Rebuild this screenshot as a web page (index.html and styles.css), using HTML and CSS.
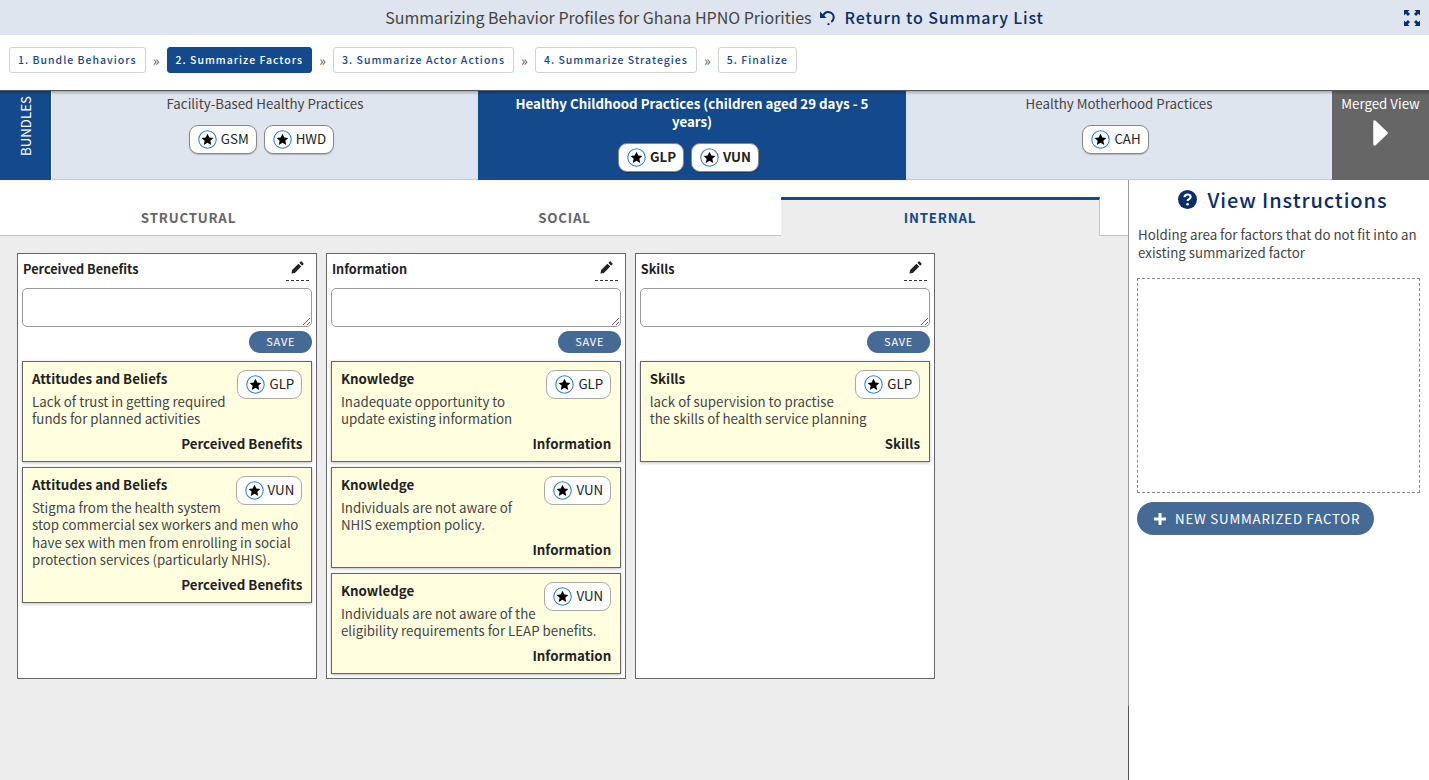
FILE: index.html
```html
<!DOCTYPE html>
<html lang="en">
<head>
    <meta charset="UTF-8">
    <meta name="viewport" content="width=device-width, initial-scale=1.0">
    <title>Summarize Factors</title>
    <link rel="stylesheet" href="styles.css">
</head>
<body>
    <svg class="defs" width="0" height="0">
        <symbol id="star" viewBox="0 0 20 20">
            <circle cx="10" cy="10" r="9.2" fill="#fff" stroke="#2f80c8" stroke-width="1.1"/>
            <path d="M10 3.9l1.9 4 4.3.5-3.2 3 .9 4.3-3.9-2.2-3.9 2.2.9-4.3-3.2-3 4.3-.5z" fill="#000"/>
        </symbol>
        <symbol id="pencil" viewBox="0 0 14 14">
            <path d="M8 3l3 3-6.800 6.800-3.700.7.700-3.700zM9 2l1.300-1.300c.4-.4 1-.4 1.400 0l1.600 1.600c.4.400.4 1 0 1.400L12 5z" fill="#222"/>
        </symbol>
    </svg>

    <header class="top_bar">
        <span class="page_title">Summarizing Behavior Profiles for Ghana HPNO Priorities</span>
        <a class="return_link">
            <svg class="return_icon" viewBox="0 0 18 18"><path d="M4 7.5c1-3 3.5-4.800 6.200-4.300 3 .5 4.800 3 4.500 5.800-.2 1.700-1.100 3.100-2.500 3.900" fill="none" stroke="#0b2d6b" stroke-width="2"/><path d="M1 2.500v6.500h6.500z" fill="#0b2d6b"/><circle cx="9.5" cy="15.2" r="1.100" fill="#0b2d6b"/></svg>
            Return to Summary List
        </a>
        <svg class="expand_icon" viewBox="0 0 16 16"><path d="M0 0h5.500L3.800 1.700 6 3.900 3.900 6 1.700 3.800 0 5.500zM16 0v5.500L14.300 3.800 12.100 6 10 3.900 12.200 1.700 10.500 0zM0 16v-5.500L1.700 12.200 3.900 10 6 12.100 3.800 14.300 5.500 16zM16 16h-5.500L12.200 14.300 10 12.100 12.100 10 14.300 12.200 16 10.500z" fill="#0b2d6b"/></svg>
    </header>

    <nav class="steps">
        <a class="step">1. Bundle Behaviors</a><span class="step_sep">»</span>
        <a class="step active">2. Summarize Factors</a><span class="step_sep">»</span>
        <a class="step">3. Summarize Actor Actions</a><span class="step_sep">»</span>
        <a class="step">4. Summarize Strategies</a><span class="step_sep">»</span>
        <a class="step">5. Finalize</a>
    </nav>

    <section class="bundles">
        <div class="bundles_label"><span>BUNDLES</span></div>
        <div class="bundle">
            <div class="bundle_name">Facility-Based Healthy Practices</div>
            <div class="bundle_tags">
                <span class="tag"><svg class="star"><use href="#star"/></svg>GSM</span>
                <span class="tag"><svg class="star"><use href="#star"/></svg>HWD</span>
            </div>
        </div>
        <div class="bundle active">
            <div class="bundle_name">Healthy Childhood Practices (children aged 29 days - 5 years)</div>
            <div class="bundle_tags">
                <span class="tag"><svg class="star"><use href="#star"/></svg>GLP</span>
                <span class="tag"><svg class="star"><use href="#star"/></svg>VUN</span>
            </div>
        </div>
        <div class="bundle">
            <div class="bundle_name">Healthy Motherhood Practices</div>
            <div class="bundle_tags">
                <span class="tag"><svg class="star"><use href="#star"/></svg>CAH</span>
            </div>
        </div>
        <div class="merged">
            <div>Merged View</div>
            <svg class="merged_arrow" viewBox="0 0 15 26"><path d="M1.5 1.5L13.5 13 1.5 24.5z" fill="#fff" stroke="#fff" stroke-width="2.5" stroke-linejoin="round"/></svg>
        </div>
    </section>

    <main class="workspace">
        <div class="board">
            <div class="tabs">
                <div class="tab">STRUCTURAL</div>
                <div class="tab">SOCIAL</div>
                <div class="tab active">INTERNAL</div>
            </div>
            <div class="columns">
                <div class="column">
                    <div class="column_head"><b>Perceived Benefits</b><span class="edit"><svg class="pencil"><use href="#pencil"/></svg></span></div>
                    <textarea class="column_input"></textarea>
                    <div class="save_row"><button class="save">SAVE</button></div>
                    <div class="card">
                        <span class="tag small"><svg class="star"><use href="#star"/></svg>GLP</span>
                        <div class="card_title">Attitudes and Beliefs</div>
                        <div class="card_text">Lack of trust in getting required funds for planned activities</div>
                        <div class="card_foot">Perceived Benefits</div>
                    </div>
                    <div class="card">
                        <span class="tag small"><svg class="star"><use href="#star"/></svg>VUN</span>
                        <div class="card_title">Attitudes and Beliefs</div>
                        <div class="card_text">Stigma from the health system<br>stop commercial sex workers and men who have sex with men from enrolling in social protection services (particularly NHIS).</div>
                        <div class="card_foot">Perceived Benefits</div>
                    </div>
                </div>
                <div class="column">
                    <div class="column_head"><b>Information</b><span class="edit"><svg class="pencil"><use href="#pencil"/></svg></span></div>
                    <textarea class="column_input"></textarea>
                    <div class="save_row"><button class="save">SAVE</button></div>
                    <div class="card">
                        <span class="tag small"><svg class="star"><use href="#star"/></svg>GLP</span>
                        <div class="card_title">Knowledge</div>
                        <div class="card_text">Inadequate opportunity to update existing information</div>
                        <div class="card_foot">Information</div>
                    </div>
                    <div class="card">
                        <span class="tag small"><svg class="star"><use href="#star"/></svg>VUN</span>
                        <div class="card_title">Knowledge</div>
                        <div class="card_text">Individuals are not aware of NHIS exemption policy.</div>
                        <div class="card_foot">Information</div>
                    </div>
                    <div class="card">
                        <span class="tag small"><svg class="star"><use href="#star"/></svg>VUN</span>
                        <div class="card_title">Knowledge</div>
                        <div class="card_text">Individuals are not aware of the eligibility requirements for LEAP benefits.</div>
                        <div class="card_foot">Information</div>
                    </div>
                </div>
                <div class="column">
                    <div class="column_head"><b>Skills</b><span class="edit"><svg class="pencil"><use href="#pencil"/></svg></span></div>
                    <textarea class="column_input"></textarea>
                    <div class="save_row"><button class="save">SAVE</button></div>
                    <div class="card">
                        <span class="tag small"><svg class="star"><use href="#star"/></svg>GLP</span>
                        <div class="card_title">Skills</div>
                        <div class="card_text">lack of supervision to practise<br>the skills of health service planning</div>
                        <div class="card_foot">Skills</div>
                    </div>
                </div>
            </div>
        </div>
        <aside class="holding">
            <h2 class="instructions">
                <svg class="help_icon" viewBox="0 0 20 20"><circle cx="10" cy="10" r="10" fill="#0b2d6b"/><path d="M6.800 7.600c.2-1.900 1.500-2.900 3.300-2.900 1.900 0 3.200 1.100 3.200 2.600 0 2.300-3.200 2.300-3.200 4.300" fill="none" stroke="#fff" stroke-width="2.2"/><circle cx="10.100" cy="15" r="1.400" fill="#fff"/></svg>
                View Instructions
            </h2>
            <p class="holding_text">Holding area for factors that do not fit into an existing summarized factor</p>
            <div class="drop_area"></div>
            <button class="new_factor"><svg class="plus_icon" viewBox="0 0 12 12"><path d="M4.5 0h3v4.500H12v3H7.5V12h-3V7.500H0v-3h4.500z" fill="#fff"/></svg>NEW SUMMARIZED FACTOR</button>
        </aside>
    </main>
</body>
</html>
```

FILE: styles.css
```css
* {
    box-sizing: border-box;
}

body {
    margin: 0;
    height: 780px;
    overflow: hidden;
    display: flex;
    flex-direction: column;
    background-color: white;
    color: #444;
    font-family: "Noto Sans CJK SC", "Open Sans", sans-serif;
    font-size: 13.3px;
}

.defs {
    position: absolute;
}

.top_bar {
    position: relative;
    height: 35px;
    display: flex;
    justify-content: center;
    align-items: center;
    background-color: #dfe5ee;
    font-size: 16px;
    line-height: 35px;
}

.return_link {
    display: flex;
    align-items: center;
    margin-left: 7px;
    color: #0b2d6b;
    font-weight: 500;
    letter-spacing: 0.85px;
}

.return_icon {
    width: 18px;
    height: 18px;
    margin-right: 8px;
}

.expand_icon {
    position: absolute;
    right: 9px;
    top: 10px;
    width: 16px;
    height: 16px;
}

.steps {
    height: 55px;
    display: flex;
    align-items: center;
    padding: 0 9px 5px;
}

.step {
    height: 26px;
    padding: 0 8px 2px;
    display: flex;
    align-items: center;
    border: 1px solid #d3d3d3;
    border-radius: 3px;
    color: #144a8c;
    font-size: 10.5px;
    font-weight: 500;
    letter-spacing: 1px;
}

.step.active {
    background-color: #144a8c;
    border-color: #144a8c;
    color: white;
}

.step_sep {
    width: 21px;
    text-align: center;
    color: #555;
    font-size: 14px;
}

.bundles {
    position: relative;
    height: 90px;
    display: flex;
    border-top: 1px solid #555;
}

.bundles::after {
    content: "";
    position: absolute;
    left: 0;
    right: 0;
    top: 0;
    height: 4px;
    background: linear-gradient(rgba(0, 0, 0, 0.25), rgba(0, 0, 0, 0));
}

.bundles_label {
    width: 51px;
    display: flex;
    justify-content: center;
    align-items: flex-start;
    background-color: #144a8c;
    color: white;
}

.bundles_label span {
    writing-mode: vertical-rl;
    transform: rotate(180deg);
    line-height: 51px;
    margin-top: 5px;
}

.bundle {
    flex: 1;
    padding: 4px 10px 0;
    margin-left: 1px;
    background-color: #dfe5ee;
    border-bottom: 1px solid #c8c8c8;
    text-align: center;
}

.bundle.active {
    flex: 0 0 428px;
    margin-left: 0;
    padding: 4px 30px 0;
    background-color: #144a8c;
    border-bottom-color: #144a8c;
    color: white;
    font-weight: 700;
}

.bundle.active + .bundle {
    margin-left: 0;
}

.bundle_name {
    line-height: 18px;
}

.bundle_tags {
    display: flex;
    justify-content: center;
    gap: 7px;
    margin-top: 12px;
    padding-right: 7px;
}

.tag {
    height: 29px;
    display: inline-flex;
    align-items: center;
    gap: 4px;
    padding: 0 7px 2px 8px;
    background-color: white;
    border: 1px solid #888;
    border-radius: 9px;
    box-shadow: 0 1px 1px rgba(0, 0, 0, 0.2);
    color: #222;
    font-size: 13.3px;
}

.star {
    width: 19px;
    height: 19px;
    margin-top: 2px;
}

.merged {
    width: 97px;
    padding-top: 4px;
    background-color: #666;
    color: white;
    line-height: 18px;
    text-align: center;
}

.merged_arrow {
    display: block;
    width: 15px;
    height: 26px;
    margin: 7px 0 0 41px;
}

.workspace {
    flex: 1;
    display: flex;
    min-height: 0;
}

.board {
    width: 1128px;
    display: flex;
    flex-direction: column;
    background-color: #ededed;
}

.tabs {
    height: 56px;
    padding: 17px 0 0 29px;
    display: flex;
    gap: 57px;
    background-color: white;
    border-bottom: 1px solid #c4c4c4;
}

.tab {
    width: 319px;
    height: 39px;
    border-top: 3px solid transparent;
    text-align: center;
    color: #666;
    font-size: 13.3px;
    font-weight: 700;
    letter-spacing: 0.8px;
    line-height: 35px;
}

.tab.active {
    background-color: #ededed;
    border-top-color: #144a8c;
    border-right: 1px solid #c4c4c4;
    color: #144a8c;
}

.columns {
    display: flex;
    gap: 8.6px;
    padding: 17px 0 0 17px;
}

.column {
    width: 300.3px;
    height: 426px;
    padding: 0 4px;
    background-color: white;
    border: 1px solid #666;
}

.column_head {
    display: flex;
    justify-content: space-between;
    height: 34px;
    padding: 5px 3px 0 1px;
    color: #222;
    font-size: 12.7px;
    line-height: 20px;
}

.edit {
    width: 23px;
    height: 22px;
    border-bottom: 1px dashed #333;
    text-align: center;
}

.pencil {
    width: 13px;
    height: 13px;
}

.column_input {
    display: block;
    width: 100%;
    height: 39px;
    border: 1px solid #999;
    border-radius: 5px;
}

.save_row {
    display: flex;
    justify-content: flex-end;
    margin-top: 4px;
}

.save {
    width: 63px;
    height: 22px;
    padding: 0 0 2px;
    background-color: #466a96;
    border: none;
    border-radius: 11px;
    color: white;
    font-family: inherit;
    font-size: 11px;
    letter-spacing: 0.8px;
}

.card {
    margin-top: 8px;
    padding: 8px 9px 9px;
    background-color: #ffffe0;
    border: 1px solid #666;
    box-shadow: 0 1px 3px rgba(0, 0, 0, 0.25);
    line-height: 17.5px;
}

.card + .card {
    margin-top: 5px;
}

.card .tag.small {
    float: right;
    border-color: #aaa;
    box-shadow: none;
    margin-left: 8px;
}

.card_title {
    font-weight: 700;
    color: #222;
}

.card_text {
    margin-top: 5px;
}

.card_foot {
    margin-top: 7px;
    font-weight: 700;
    color: #222;
    text-align: right;
}

.holding {
    flex: 1;
    padding: 0 9px 0 8px;
    border-left: 1px solid;
    border-image: linear-gradient(#999 525px, #555 525px) 1;
}

.instructions {
    display: flex;
    justify-content: center;
    align-items: center;
    height: 39px;
    margin: 0;
    padding-left: 8px;
    color: #0b2d6b;
    font-size: 20px;
    font-weight: 500;
    letter-spacing: 0.9px;
}

.help_icon {
    width: 19px;
    height: 19px;
    margin-right: 11px;
}

.holding_text {
    margin: 7px 0 0;
    padding-left: 1px;
    line-height: 18px;
}

.drop_area {
    height: 215px;
    margin-top: 16px;
    border: 1px dashed #888;
}

.new_factor {
    display: flex;
    align-items: center;
    width: 237px;
    height: 33px;
    margin-top: 9px;
    padding: 0 0 0 17px;
    background-color: #466a96;
    border: none;
    border-radius: 17px;
    color: white;
    font-family: inherit;
    font-size: 13.3px;
    letter-spacing: 0.8px;
}

.plus_icon {
    width: 12px;
    height: 12px;
    margin-right: 9px;
}
```
